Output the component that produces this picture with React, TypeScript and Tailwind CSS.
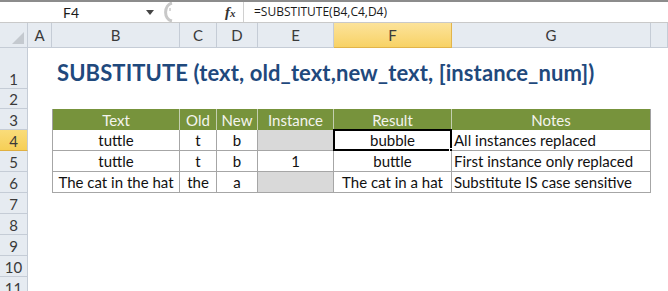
import React from "react";

const cols = ["A", "B", "C", "D", "E", "F", "G", ""];

type Cell = { text?: string; gray?: boolean; left?: boolean; selected?: boolean };

const tableHead = ["Text", "Old", "New", "Instance", "Result", "Notes"];

const tableRows: Cell[][] = [
  [{ text: "tuttle" }, { text: "t" }, { text: "b" }, { gray: true }, { text: "bubble", selected: true }, { text: "All instances replaced", left: true }],
  [{ text: "tuttle" }, { text: "t" }, { text: "b" }, { text: "1" }, { text: "buttle" }, { text: "First instance only replaced", left: true }],
  [{ text: "The cat in the hat" }, { text: "the" }, { text: "a" }, { gray: true }, { text: "The cat in a hat" }, { text: "Substitute IS case sensitive", left: true }],
];

const gridCols = "grid grid-cols-[28px_24px_128px_37px_41px_76px_118px_199px_1fr]";

const RowHead = ({ n, active, h }: { n: number; active?: boolean; h: string }) => (
  <div
    className={`${h} flex items-end justify-center pb-[1px] border-r border-b border-[#c5ccd6] text-[15px] leading-none text-[#3a3a3a] ${
      active ? "bg-gradient-to-b from-[#f9dc7a] to-[#f6cf56] border-b-[#e0b040]" : "bg-[#e6ebf1]"
    }`}
  >
    {n}
  </div>
);

const Blank = ({ h }: { h: string }) => <div className={`${h} bg-white`} />;

const App = () => {
  return (
    <div className="w-[668px] h-[291px] overflow-hidden bg-white font-['Lato','Open_Sans',sans-serif]">
      {/* formula bar */}
      <div className="h-[2px] bg-[#8c8c8c]" />
      <div className="flex h-[21px] items-center bg-white border-b border-[#c9c9c9] text-[14px] text-[#1a1a1a]">
        <div className="w-[142px] text-center">F4</div>
        <svg width="8" height="5" className="ml-[4px]">
          <path d="M0 0 L8 0 L4 5 Z" fill="#444" />
        </svg>
        <svg width="20" height="20" className="ml-[4px]">
          <path d="M14 1 C6 3 5 17 14 19" stroke="#c8c8c8" strokeWidth="3" fill="none" />
          <path d="M12 6 L12 9" stroke="#d8d8d8" strokeWidth="2" />
        </svg>
        <div className="flex-1" />
        <div className="w-[15px] font-['Liberation_Serif',serif] italic font-bold text-[15px] text-[#333] leading-none">
          f<span className="text-[11px]">x</span>
        </div>
        <div className="h-full w-[1px] bg-[#d0d0d0] ml-[3px]" />
        <div className="w-[424px] pl-[10px] font-['Open_Sans',sans-serif] text-[12px]">=SUBSTITUTE(B4,C4,D4)</div>
      </div>

      {/* column headers */}
      <div className={`${gridCols} h-[25px]`}>
        <div className="relative bg-[#e6ebf1] border-r border-b border-[#c5ccd6]">
          <svg width="12" height="12" className="absolute right-[3px] bottom-[3px]">
            <path d="M12 0 L12 12 L0 12 Z" fill="#c4c9cf" />
          </svg>
        </div>
        {cols.map((c, i) => (
          <div
            key={i}
            className={`flex items-center justify-center border-r border-b text-[15px] text-[#3a3a3a] ${
              c === "F"
                ? "bg-gradient-to-b from-[#fce39a] to-[#f8d264] border-[#e2b44a]"
                : "bg-[#e6ebf1] border-[#c5ccd6]"
            }`}
          >
            {c}
          </div>
        ))}
      </div>

      {/* row 1 title */}
      <div className={gridCols}>
        <RowHead n={1} h="h-[41px]" />
        <Blank h="h-[41px]" />
        <div className="col-span-7 h-[41px] flex items-center pl-[5px] pt-[7px] whitespace-nowrap font-bold text-[22px] tracking-[0.1px] text-[#1f497d]">
          SUBSTITUTE (text, old_text,new_text, [instance_num])
        </div>
      </div>

      {/* row 2 */}
      <div className={gridCols}>
        <RowHead n={2} h="h-[20px]" />
      </div>

      {/* row 3 header */}
      <div className={gridCols}>
        <RowHead n={3} h="h-[21px]" />
        <Blank h="h-[21px]" />
        {tableHead.map((t, i) => (
          <div
            key={t}
            className={`h-[21px] flex items-end justify-center pb-[1px] bg-[#77933c] text-[#f4f4ee] text-[15px] leading-[18px] border-r border-[#c4cfb0] ${
              i === 0 ? "border-l border-l-[#a0a0a0]" : ""
            } ${i === 5 ? "border-r-[#a0a0a0]" : ""}`}
          >
            {t}
          </div>
        ))}
        <Blank h="h-[21px]" />
      </div>

      {/* table rows */}
      {tableRows.map((row, r) => (
        <div key={r} className={gridCols}>
          <RowHead n={r + 4} active={r === 0} h="h-[21px]" />
          <Blank h="h-[21px]" />
          {row.map((c, i) => (
            <div
              key={i}
              className={`relative h-[21px] flex items-end pb-[1px] text-[15px] leading-[18px] text-[#111] border-r border-b border-[#a6a6a6] whitespace-nowrap ${
                c.left ? "justify-start pl-[2px]" : "justify-center"
              } ${c.gray ? "bg-[#d9d9d9]" : "bg-white"} ${i === 0 ? "border-l" : ""}`}
            >
              {c.text}
              {c.selected && (
                <>
                  <div className="absolute left-[-1px] top-[-1px] right-[-1px] bottom-[-1px] border-2 border-black" />
                  <div className="absolute right-[-4px] bottom-[-4px] w-[6px] h-[6px] bg-black border border-white" />
                </>
              )}
            </div>
          ))}
          <Blank h="h-[21px]" />
        </div>
      ))}

      {/* empty rows */}
      {[7, 8, 9, 10, 11].map((n) => (
        <div key={n} className={gridCols}>
          <RowHead n={n} h="h-[21px]" />
        </div>
      ))}
    </div>
  );
};

export default App;
